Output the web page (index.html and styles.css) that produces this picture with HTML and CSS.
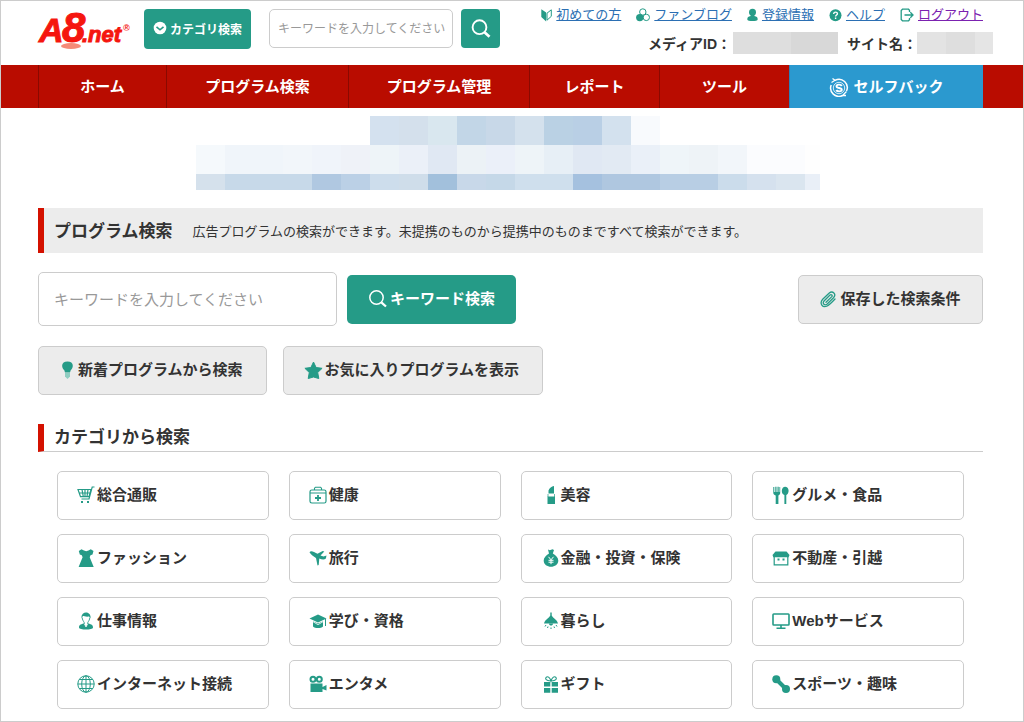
FILE: index.html
```html
<!DOCTYPE html>
<html lang="ja">
<head>
<meta charset="utf-8">
<meta name="viewport" content="width=device-width, initial-scale=1">
<title>プログラム検索</title>
<link rel="stylesheet" href="styles.css">
</head>
<body>
<div class="page">
  <header class="header">
    <a class="logo" href="#" aria-label="A8.net">
      <svg width="94" height="50" viewBox="0 -8 94 50" class="logo-art">
        <ellipse cx="33" cy="37" rx="10" ry="3" fill="#f58a78" stroke="none"/>
        <text x="1" y="33" font-size="34">A</text>
        <text x="24" y="33" font-size="42">8</text>
        <text x="44" y="33" font-size="22">.net</text>
        <text x="85" y="22" font-size="9" class="logo-mark">®</text>
      </svg>
    </a>
    <button class="btn-category" type="button">
      <svg width="14" height="14" viewBox="0 0 14 14"><circle cx="7" cy="7" r="6.3" fill="#fff"/><path d="M3.5 5.8 7 8.8l3.5-3" fill="none" stroke="#259b87" stroke-width="1.6"/></svg>
      カテゴリ検索
    </button>
    <form class="quick">
      <input class="quick-input" type="text" aria-label="キーワード" placeholder="キーワードを入力してください">
      <button class="quick-btn" type="button" aria-label="検索">
        <svg width="20" height="20" viewBox="0 0 20 20" fill="none" stroke="#fff"><circle cx="8.5" cy="8.2" r="6.9" stroke-width="1.9"/><path d="m13.500 13.200 5 4.600" stroke-width="2.700"/></svg>
      </button>
    </form>
    <div class="account">
      <nav class="links">
        <a href="#"><svg width="11" height="14" viewBox="0 0 11 14"><path d="M.3 1.200 5.200 4.600V13.500L.3 9z" fill="#259b87"/><path d="M10.300 1.800 6 5.200v7l4.300-3.900z" fill="#fff" stroke="#259b87"/></svg><span>初めての方</span></a>
        <a href="#"><svg width="14" height="14" viewBox="0 0 14 14"><circle cx="6.800" cy="4" r="3.200" fill="#fff" stroke="#259b87"/><circle cx="10.300" cy="9.400" r="3.200" fill="#fff" stroke="#259b87"/><circle cx="3.800" cy="9.600" r="3.700" fill="#259b87"/></svg><span>ファンブログ</span></a>
        <a href="#"><svg width="11" height="14" viewBox="0 0 11 14" fill="#259b87"><circle cx="5.500" cy="4.200" r="3.500"/><path d="M3.700 6h3.600v2c2.500.6 3.400 1.200 3.400 3.500 0 2-10.400 2-10.400 0 0-2.300.9-2.900 3.400-3.500z"/></svg><span>登録情報</span></a>
        <a href="#"><svg width="13" height="14" viewBox="0 0 13 14"><circle cx="6.500" cy="7.300" r="6" fill="#259b87"/><path d="M4.700 6c0-2.600 3.800-2.400 3.700-.3 0 1.200-1.800 1.300-1.800 2.700m0 1.200v1.500" fill="none" stroke="#fff" stroke-width="1.400"/></svg><span>ヘルプ</span></a>
        <a href="#" class="visited"><svg width="14" height="14" viewBox="0 0 14 14" fill="none" stroke="#259b87" stroke-width="1.300"><path d="M9.500 4V2.200L8.500 1.200h-6L1.200 2.500v9l1.300 1.300h6l1-1V10M4.500 7h8.500M10.300 4.300 13 7l-2.700 2.700"/></svg><span>ログアウト</span></a>
      </nav>
      <div class="ids">
        <span>メディアID：</span><span class="mask mask-media"></span>
        <span class="site">サイト名：</span><span class="mask mask-site"></span>
      </div>
    </div>
  </header>

  <nav class="gnav">
    <a href="#">ホーム</a>
    <a href="#">プログラム検索</a>
    <a href="#">プログラム管理</a>
    <a href="#">レポート</a>
    <a href="#">ツール</a>
    <a href="#" class="selfback">
      <svg width="20" height="20" viewBox="0 0 20 20" fill="none" stroke="#fff"><path d="M6 3.300A8.300 8.300 0 0 1 17.500 14M2.200 8A8.300 8.300 0 0 0 13.500 18.500" stroke-width="1.500"/><path d="M2.500 5.500 6 3.300 3.500 1.500M17.500 14.500 13.500 18.500l3.500 0" stroke-width="1.300"/><circle cx="10" cy="11" r="5.700" stroke-width=".8"/><path d="M12.800 9c-.8-1.800-5.300-1.800-5.300.2 0 2.300 5.300 1.300 5.300 3.600 0 2-4.700 2-5.500.2" stroke-width="1.900"/></svg>
      セルフバック
    </a>
  </nav>

  <main class="main">
    <svg class="notice" width="624" height="75" viewBox="0 0 624 75" shape-rendering="crispEdges" aria-hidden="true">
      <g>
        <path fill="#d4e1ef" d="M174 0h29v29h-29z"/><path fill="#d4e0ec" d="M203 0h29v29h-29z"/><path fill="#d9e7ef" d="M232 0h29v29h-29z"/><path fill="#c2d6e7" d="M261 0h29v29h-29z"/><path fill="#c8d8e8" d="M290 0h29v29h-29z"/><path fill="#d4e1ed" d="M319 0h29v29h-29z"/><path fill="#bad1e4" d="M348 0h29v29h-29z"/><path fill="#b9cfe5" d="M377 0h29v29h-29z"/><path fill="#d3e1ee" d="M406 0h29v29h-29z"/><path fill="#f8fafd" d="M435 0h29v29h-29z"/>
      </g>
      <g>
        <path fill="#f5f9fc" d="M0 29h29v29H0z"/><path fill="#f0f5fa" d="M29 29h58v29H29z"/><path fill="#f2f6fa" d="M87 29h29v29H87z"/><path fill="#f0f4fa" d="M116 29h29v29h-29z"/><path fill="#eff2f8" d="M145 29h29v29h-29z"/><path fill="#eef4f8" d="M174 29h29v29h-29z"/><path fill="#ebf0f8" d="M203 29h29v29h-29z"/><path fill="#e0e8f3" d="M232 29h29v29h-29z"/><path fill="#ecf2f6" d="M261 29h29v29h-29z"/><path fill="#ebf0f9" d="M290 29h29v29h-29z"/><path fill="#eef4f8" d="M319 29h29v29h-29z"/><path fill="#e7eff6" d="M348 29h29v29h-29z"/><path fill="#e0e8f3" d="M377 29h29v29h-29z"/><path fill="#e2eaf3" d="M406 29h29v29h-29z"/><path fill="#eaf0f8" d="M435 29h29v29h-29z"/><path fill="#eff5f9" d="M464 29h29v29h-29z"/><path fill="#eef3f7" d="M493 29h29v29h-29z"/><path fill="#f2f6fa" d="M522 29h29v29h-29z"/><path fill="#fbfcfe" d="M551 29h58v29h-58z"/><path fill="#fefefe" d="M609 29h15v29h-15z"/>
      </g>
      <g>
        <path fill="#d5e1ec" d="M0 58h29v16H0z"/><path fill="#c7d9e9" d="M29 58h87v16H29z"/><path fill="#b0c8e1" d="M116 58h29v16h-29z"/><path fill="#bbd0e6" d="M145 58h29v16h-29z"/><path fill="#cdddec" d="M174 58h29v16h-29z"/><path fill="#cfddea" d="M203 58h29v16h-29z"/><path fill="#a2c0dc" d="M232 58h29v16h-29z"/><path fill="#c8d8e9" d="M261 58h29v16h-29z"/><path fill="#c5d8e8" d="M290 58h29v16h-29z"/><path fill="#cfdfed" d="M319 58h58v16h-58z"/><path fill="#a5c1df" d="M377 58h29v16h-29z"/><path fill="#afc7e0" d="M406 58h58v16h-58z"/><path fill="#b8cee4" d="M464 58h58v16h-58z"/><path fill="#cbdceb" d="M522 58h29v16h-29z"/><path fill="#d5e1ee" d="M551 58h29v16h-29z"/><path fill="#dae5ef" d="M580 58h29v16h-29z"/><path fill="#e9eff7" d="M609 58h15v16h-15z"/>
      </g>
    </svg>

    <div class="title">
      <h1>プログラム検索</h1>
      <p>広告プログラムの検索ができます。未提携のものから提携中のものまですべて検索ができます。</p>
    </div>

    <form class="search">
      <input class="search-input" type="text" aria-label="検索キーワード" placeholder="キーワードを入力してください">
      <button class="btn btn-main" type="button">
        <svg class="btn-ico" width="20" height="20" viewBox="0 0 20 20" fill="none" stroke="#fff"><circle cx="8.500" cy="8.500" r="6.700" stroke-width="1.500"/><path d="m13.300 13.300 4.700 4.200" stroke-width="2.300"/></svg>キーワード検索
      </button>
      <button class="btn btn-saved" type="button">
        <svg class="btn-ico" width="17" height="18" viewBox="0 0 17 18" fill="none" stroke="#259b87" stroke-width="1.300" stroke-linecap="round"><path d="m6 12.300 5.800-5.700c1-1.300-.5-2.700-1.800-1.600l-6 6c-2 2.500.7 5 3.200 3l6.300-6.200c3.300-3.800-.8-7.500-4.500-4.600L2.700 9.300c-3.600 4-.2 9 4.500 6.700 1.500-.7 5-4 7.800-7"/></svg>
        保存した検索条件
      </button>
    </form>
    <div class="shortcuts">
      <button class="btn" type="button">
        <svg class="btn-ico" width="17" height="20" viewBox="0 0 17 20"><path d="M8.500 1.500c7 0 6 6.500 3.200 8.700l-.7 2.300H6l-.7-2.300C2.500 8 1.500 1.500 8.500 1.500z" fill="#259b87"/><path d="M6 13h5v3.500L8.500 19 6 16.500z" fill="#8fcdc1"/></svg>新着プログラムから検索
      </button>
      <button class="btn" type="button">
        <svg class="btn-ico" width="19" height="20" viewBox="0 0 19 20"><path d="m9.500 2 2.600 5.500 6 .8-4.400 4.200 1.100 6-5.300-1.500-5.300 1.500 1.100-6L.9 8.300l6-.8z" fill="#259b87" stroke="#259b87" stroke-linejoin="round"/></svg>お気に入りプログラムを表示
      </button>
    </div>

    <h2 class="subtitle">カテゴリから検索</h2>
    <div class="cards">
      <a class="card" href="#"><svg class="ico" viewBox="0 0 18 18" fill="none" stroke="#259b87"><path d="M1 3.500h13L12 10.700H3.500zM17.500 1h-2.300L12 13H4.500M2 7h11M5 3.500l1.300 7.200M8 3.500v7.200M11 3.500l-1 7.200" stroke-width="1.200"/><path d="M4 16h2M10 16h2" stroke-width="2"/></svg>総合通販</a>
      <a class="card" href="#"><svg class="ico" viewBox="0 0 18 18" fill="none" stroke="#259b87"><rect x="1" y="4" width="16" height="13" rx="1.800" stroke-width="1.200"/><path d="M5.500 4V2.200l1-1h5l1 1V4M1 7h16" stroke-width="1.100"/><path d="M9 9v6M6 12h6" stroke-width="1.800"/></svg>健康</a>
      <a class="card" href="#"><svg class="ico" viewBox="0 0 18 18" fill="#259b87"><path d="M7.500 7.500V4.500c1-2.500 3-4 5.500-4.500v7.500zM6.500 10.500H14V18H6.500z"/><path d="M7 8v3M13.500 8v3" stroke="#259b87" stroke-width=".7"/></svg>美容</a>
      <a class="card" href="#"><svg class="ico" viewBox="0 0 18 18" fill="#259b87"><path d="M1.300 1h1v5h1V.7h1.200V6h1V.7h1.200V6h.7V1h.8v6c0 1.300-.8 2-1.800 2.400V18H3.700V9.400C2.300 9 1.300 8.300 1.300 7zM9.800 5c0-6 7-5.500 6.800 0-.2 2.300-1.200 3.500-2.300 4v9h-1.900V9C11 8.500 9.800 7.300 9.800 5z"/></svg>グルメ・食品</a>

      <a class="card" href="#"><svg class="ico" viewBox="0 0 18 18" fill="#259b87"><path d="M1.800 2 4.500.3 7 1.500l2.200.7 2.300-.7L13.800.3 16.500 2l-1 3.500-2 .7-.8 2 4 9.800H1.600l4-9.800-.8-2-2-.7z"/></svg>ファッション</a>
      <a class="card" href="#"><svg class="ico" viewBox="0 0 18 18" fill="#259b87"><path d="M.5 3.300C1.200 2 3 2 5 3l3.500 1.800L13.700 2l1.600.5-3.800 4 3 1 3-1-.6 3c-1.800 1.500-4 1-6.600 0L9.700 16l-1.200.5L7 9C4.500 7.300 2 6 .5 3.300z"/></svg>旅行</a>
      <a class="card" href="#"><svg class="ico" viewBox="0 0 18 18"><path d="M7 .5 8.800 1.200 11.500.3l1.500.8L11.800 4.500C15 6 17.300 9 17.300 11.500c0 8.300-14.600 8.300-14.600 0 0-2.500 2.300-5.500 5.300-7z" fill="#259b87"/><path d="m7.500 7.800 2.500 3 2.500-3M10 10.500v4.700M7.500 11.300h5M7.500 13.200h5" fill="none" stroke="#fff" stroke-width="1"/></svg>金融・投資・保険</a>
      <a class="card" href="#"><svg class="ico" viewBox="0 0 18 18"><path d="M3.500 2.500h11L17.500 6l-.8 2.300H1.300L.5 6z" fill="#259b87"/><path d="M2.200 8v7.800h13.600V8" fill="none" stroke="#259b87" stroke-width="1.200"/><path d="M5.500 9.500h2v2h-2zM10.500 9.500h2v2h-2z" fill="#259b87"/></svg>不動産・引越</a>

      <a class="card" href="#"><svg class="ico" viewBox="0 0 18 18"><path d="M4.500 6C3.500-1.500 14.500-1.500 13.500 6L12 4.500C9 5 7 4 6 4z" fill="#259b87"/><path d="M5.200 5.500c0 2.200 1.300 3.700 2 5v2M12.800 5.500c0 2.200-1.300 3.700-2 5v2" fill="none" stroke="#259b87" stroke-width=".9"/><path d="M7 11.500c-4 1-5 1.500-5 4 0 2.700 14 2.700 14 0 0-2.500-1-3-5-4l-2 3z" fill="#259b87"/><path d="m7.500 12 1.500 3 1.500-3" fill="none" stroke="#fff" stroke-width=".8"/></svg>仕事情報</a>
      <a class="card" href="#"><svg class="ico" viewBox="0 0 18 18" fill="#259b87"><path d="m.5 6.500 8.500-4 8.500 4-8.500 4zM4 9.200l5 2.300 5-2.300v5.300c-2 2-8 2-10 0z"/><path d="m4 9.700 5 3 5-3" fill="none" stroke="#fff" stroke-width=".8"/><path d="M16.500 7v7" stroke="#259b87"/></svg>学び・資格</a>
      <a class="card" href="#"><svg class="ico" viewBox="0 0 18 18" fill="#259b87"><path d="M9.300.5h1.400v3c1.500 3 5.500 4 6.300 8H3c.8-4 4.800-5 6.300-8z"/><path d="M8 11.500c0 2.700 4 2.700 4 0z"/><path d="m5 13-1 1.500M15 13l1 1.500M7 14.500 6.500 16M13 14.500l.5 1.500M10 15.500v1.500" stroke="#259b87"/></svg>暮らし</a>
      <a class="card" href="#"><svg class="ico" viewBox="0 0 18 18" fill="none" stroke="#259b87"><rect x="1" y="2" width="16" height="11" rx=".7" stroke-width="1.600"/><path d="M9 13v3M4.500 16.300h9" stroke-width="1.600"/></svg>Webサービス</a>

      <a class="card" href="#"><svg class="ico" viewBox="0 0 18 18" fill="none" stroke="#259b87"><circle cx="9" cy="9" r="8.200"/><ellipse cx="9" cy="9" rx="4.300" ry="8.200"/><path d="M9 .8v16.400M.8 9h16.400M2.300 4.500h13.400M2.300 13.500h13.400"/></svg>インターネット接続</a>
      <a class="card" href="#"><svg class="ico" viewBox="0 0 18 18"><circle cx="4" cy="4.200" r="2.500" fill="none" stroke="#259b87" stroke-width="2"/><circle cx="10.300" cy="4.200" r="2.500" fill="none" stroke="#259b87" stroke-width="2"/><path d="M1.500 8.500h12V12l4-2v5.500l-4-1.500v3h-12z" fill="#259b87"/></svg>エンタメ</a>
      <a class="card" href="#"><svg class="ico" viewBox="0 0 18 18"><path d="M3 7h6.300v4.500H3zM10.700 7H17v4.500h-6.300zM3 13h6.300v4.800H3zM10.700 13H17v4.800h-6.300z" fill="#259b87"/><path d="M9.500 6C5 5.500 4 4 5 2.500 7 .5 9 3 10 6c1-3 3-5.500 5-3.500 1 1.500 0 3-4.500 3.500" fill="none" stroke="#259b87" stroke-width="1.100"/></svg>ギフト</a>
      <a class="card" href="#"><svg class="ico" viewBox="0 0 18 18" fill="#259b87"><circle cx="4.300" cy="4.200" r="4"/><circle cx="14" cy="14" r="4"/><path d="m4 4 10 10" stroke="#259b87" stroke-width="4"/></svg>スポーツ・趣味</a>
    </div>
  </main>
</div>
</body>
</html>
```
FILE: styles.css
```css
* {
  box-sizing: border-box;
}

body {
  margin: 0;
  color: #333;
  background: #fff;
  font-family: "Liberation Sans", "Noto Sans CJK JP", sans-serif;
  font-size: 15px;
}

button,
input {
  font-family: inherit;
}

svg {
  flex: none;
}

.page {
  min-height: 100vh;
  border: 1px solid #ccc;
}

/* header */
.header {
  display: flex;
  align-items: flex-start;
  min-height: 64px;
  padding: 0 30px 0 37px;
}

.logo-art {
  display: block;
  fill: #f5160f;
  stroke: #f5160f;
  overflow: visible;
  font-family: "Liberation Sans", sans-serif;
  font-weight: bold;
  font-style: italic;
}

.logo-mark {
  stroke: none;
}

.btn-category {
  display: flex;
  align-items: center;
  gap: 3px;
  height: 40px;
  margin: 8px 0 0 12px;
  padding: 0 9px 2px;
  border: 0;
  border-radius: 4px;
  background: #259b87;
  color: #fff;
  font-size: 12px;
  font-weight: bold;
  white-space: nowrap;
}

.quick {
  display: flex;
  gap: 8px;
  margin: 8px 0 0 18px;
}

.quick-input {
  width: 184px;
  height: 39px;
  padding: 0 4px 0 8px;
  border: 1px solid #ccc;
  border-radius: 5px;
  font-size: 12px;
}

.quick-btn {
  display: flex;
  align-items: center;
  justify-content: center;
  width: 39px;
  height: 39px;
  padding: 0;
  border: 0;
  border-radius: 4px;
  background: #259b87;
}

::placeholder {
  color: #999;
  opacity: 1;
}

.account {
  display: flex;
  flex-direction: column;
  align-items: flex-end;
  gap: 7px;
  margin: 4px 0 0 auto;
  white-space: nowrap;
}

.links {
  display: flex;
  gap: 15px;
  margin-right: 10px;
  font-size: 13px;
  line-height: 20px;
}

.links a {
  display: flex;
  align-items: center;
  gap: 4px;
  color: #2b6fb3;
  text-decoration: none;
}

.links span {
  text-decoration: underline;
}

.links .visited {
  color: #7b22b0;
}

.ids {
  display: flex;
  align-items: center;
  font-size: 14px;
  font-weight: bold;
}

.site {
  margin-left: 9px;
}

.mask {
  height: 22px;
}

.mask-media {
  width: 105px;
  margin-left: 2px;
  background: linear-gradient(90deg, #dedede 55%, #d8d8d8 55%);
}

.mask-site {
  width: 76px;
  background: linear-gradient(90deg, #e3e3e3 38%, #dedede 38% 76%, #e5e5e5 76%);
}

/* global navigation */
.gnav {
  display: grid;
  grid-template-columns: 128fr 182fr 181fr 130fr 130fr 194fr;
  padding: 0 40px 0 37px;
  background: #b90c00;
}

.gnav a {
  display: flex;
  align-items: center;
  justify-content: center;
  gap: 4px;
  height: 43px;
  padding-bottom: 2px;
  border-left: 1px solid #8a0900;
  color: #fff;
  font-weight: bold;
  text-decoration: none;
  white-space: nowrap;
}

.gnav svg {
  margin-top: 2px;
}

.gnav .selfback {
  border-left-color: #2b80b8;
  background: #2b99cf;
}

/* main column */
.main {
  padding: 8px 40px 12px 37px;
}

.notice {
  display: block;
  max-width: 100%;
  margin: 0 auto 17px;
  padding-right: 5px;
  box-sizing: content-box;
}

.title {
  display: flex;
  align-items: center;
  gap: 20px;
  min-height: 45px;
  padding-left: 10px;
  border-left: 6px solid #d41100;
  background: #ececec;
}

.title h1 {
  margin: 0;
  padding-bottom: 3px;
  font-size: 17px;
}

.title p {
  margin: 0;
  font-size: 13px;
}

.search {
  display: flex;
  align-items: center;
  gap: 10px;
  margin-top: 19px;
}

.search-input {
  width: 299px;
  height: 54px;
  padding: 0 15px;
  border: 1px solid #ccc;
  border-radius: 5px;
  font-size: 15px;
}

.btn {
  display: flex;
  align-items: center;
  justify-content: center;
  height: 49px;
  padding: 0 19px 4px;
  border: 1px solid #ccc;
  border-radius: 5px;
  background: #ececec;
  color: #333;
  font-size: 15px;
  font-weight: bold;
  white-space: nowrap;
}

.btn-ico {
  margin-top: 3px;
}

.btn-main {
  width: 169px;
  border: 0;
  background: #259b87;
  color: #fff;
  gap: 2px;
}

.btn-saved {
  gap: 3px;
  width: 185px;
  margin-left: auto;
}

.shortcuts {
  display: flex;
  gap: 16px;
  margin-top: 20px;
}

.shortcuts .btn {
  gap: 2px;
  padding: 0 23px 4px 20px;
}

.subtitle {
  margin: 29px 0 0;
  padding-left: 10px;
  border-bottom: 1px solid #ccc;
  border-left: 6px solid #d41100;
  font-size: 17px;
  line-height: 27px;
}

.cards {
  display: grid;
  grid-template-columns: repeat(4, 1fr);
  gap: 14px 20px;
  margin: 19px 19px 0;
}

.card {
  display: flex;
  align-items: center;
  gap: 2px;
  height: 49px;
  padding: 0 19px 4px;
  border: 1px solid #ccc;
  border-radius: 5px;
  color: #333;
  font-weight: bold;
  text-decoration: none;
  white-space: nowrap;
}

.ico {
  width: 18px;
  height: 18px;
  margin-top: 3px;
}
```
